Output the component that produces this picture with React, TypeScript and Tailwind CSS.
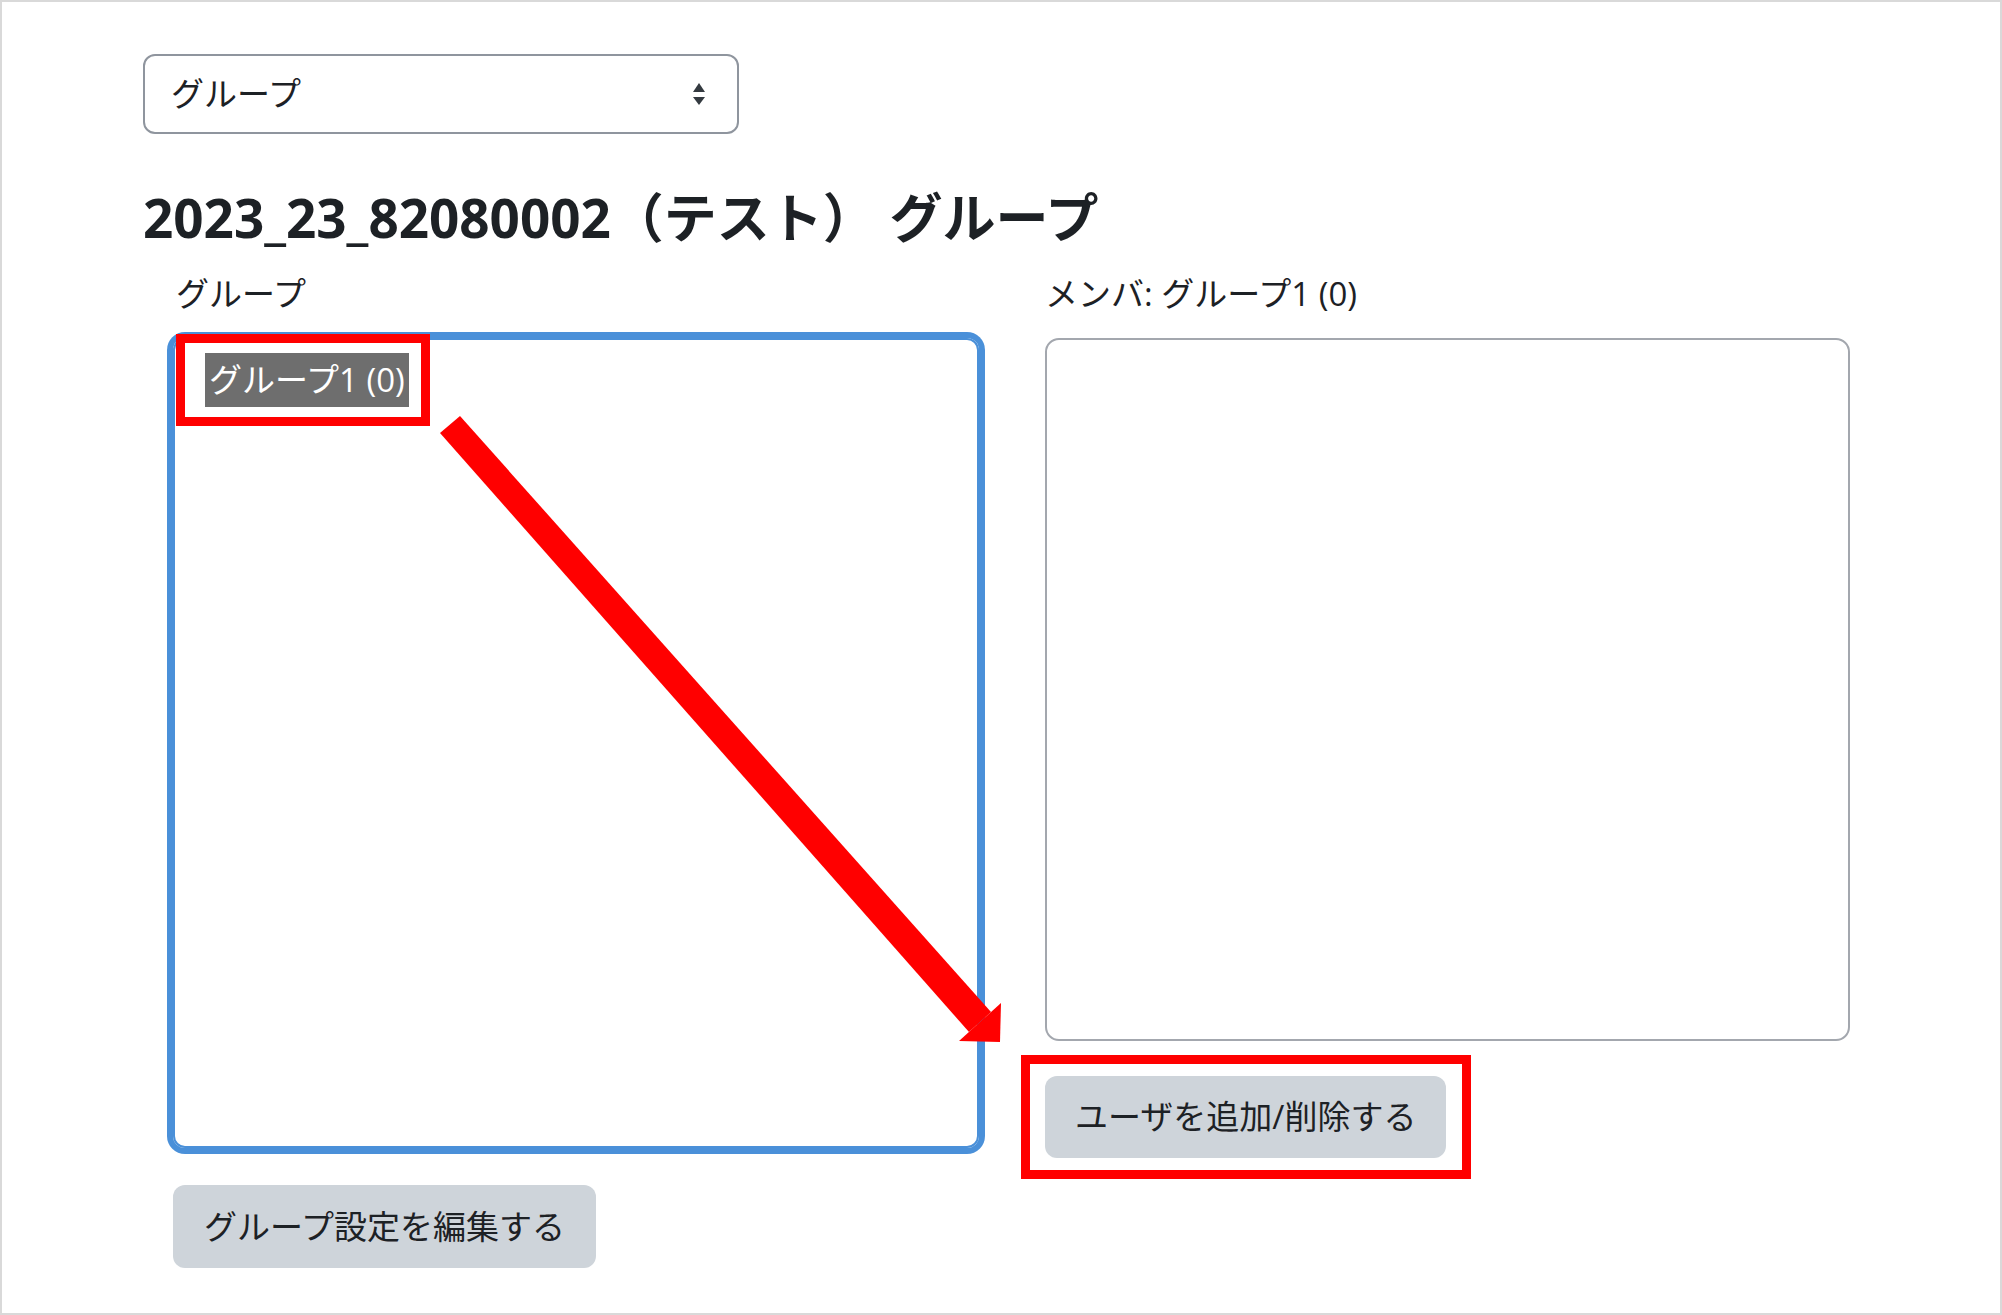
import React from "react";

const font = { fontFamily: '"Open Sans", "Noto Sans CJK JP", sans-serif' };

function SortIcon() {
  return (
    <svg width="12" height="22" viewBox="0 0 12 22" className="shrink-0">
      <path d="M0 9 L6 0 L12 9 Z" fill="#343a40" />
      <path d="M0 14 L6 22 L12 14 Z" fill="#343a40" />
    </svg>
  );
}

function Annotations() {
  return (
    <svg
      className="pointer-events-none absolute -left-[2px] -top-[2px]"
      width="2002"
      height="1315"
      viewBox="0 0 2002 1315"
    >
      <rect x="180.5" y="338.5" width="245" height="83" fill="none" stroke="#ff0000" strokeWidth="9" />
      <rect x="1025.5" y="1059.5" width="441" height="115" fill="none" stroke="#ff0000" strokeWidth="9" />
      <polygon points="440,433 460,416 991,1012 969,1032" fill="#ff0000" />
      <polygon points="1001,1003 1000,1042 959,1041" fill="#ff0000" />
    </svg>
  );
}

export default function App() {
  return (
    <div
      className="relative h-[1315px] w-[2002px] overflow-hidden border-2 border-[#d9d9d9] bg-white text-[#1d2125]"
      style={font}
    >
      <div className="pl-[141px] pt-[52px]">
        <div className="flex h-[80px] w-[596px] items-center justify-between rounded-[12px] border-2 border-[#8f959e] pl-[26px] pr-[32px] text-[33px]">
          <span>グループ</span>
          <SortIcon />
        </div>

        <h3 className="mt-[52px] text-[53px] font-bold leading-[64px]">
          2023_23_82080002（テスト） グループ
        </h3>

        <div className="mt-[24px] flex gap-[66px] pl-[30px]">
          <div className="w-[806px]">
            <div className="pl-[3px] text-[33px] leading-[40px]">グループ</div>
            <div className="mt-[24px] h-[810px] rounded-[12px] border-2 border-[#4a90d9] pl-[30px] pt-[13px] shadow-[0_0_0_6px_#4a90d9]">
              <div className="inline-block h-[54px] bg-[#6e6e6e] px-[4px] text-[33px] leading-[54px] text-white">
                グループ1 (0)
              </div>
            </div>
            <button
              type="button"
              className="mt-[37px] h-[83px] rounded-[12px] bg-[#ced4da] px-[31px] text-[33px] text-[#1d2125]"
            >
              グループ設定を編集する
            </button>
          </div>

          <div className="w-[805px]">
            <div className="text-[33px] leading-[40px]">メンバ: グループ1 (0)</div>
            <div className="mt-[24px] h-[703px] rounded-[14px] border-2 border-[#a3a7ae]" />
            <button
              type="button"
              className="mt-[35px] h-[82px] rounded-[12px] bg-[#ced4da] px-[30px] text-[33px] text-[#1d2125]"
            >
              ユーザを追加/削除する
            </button>
          </div>
        </div>
      </div>
      <Annotations />
    </div>
  );
}
